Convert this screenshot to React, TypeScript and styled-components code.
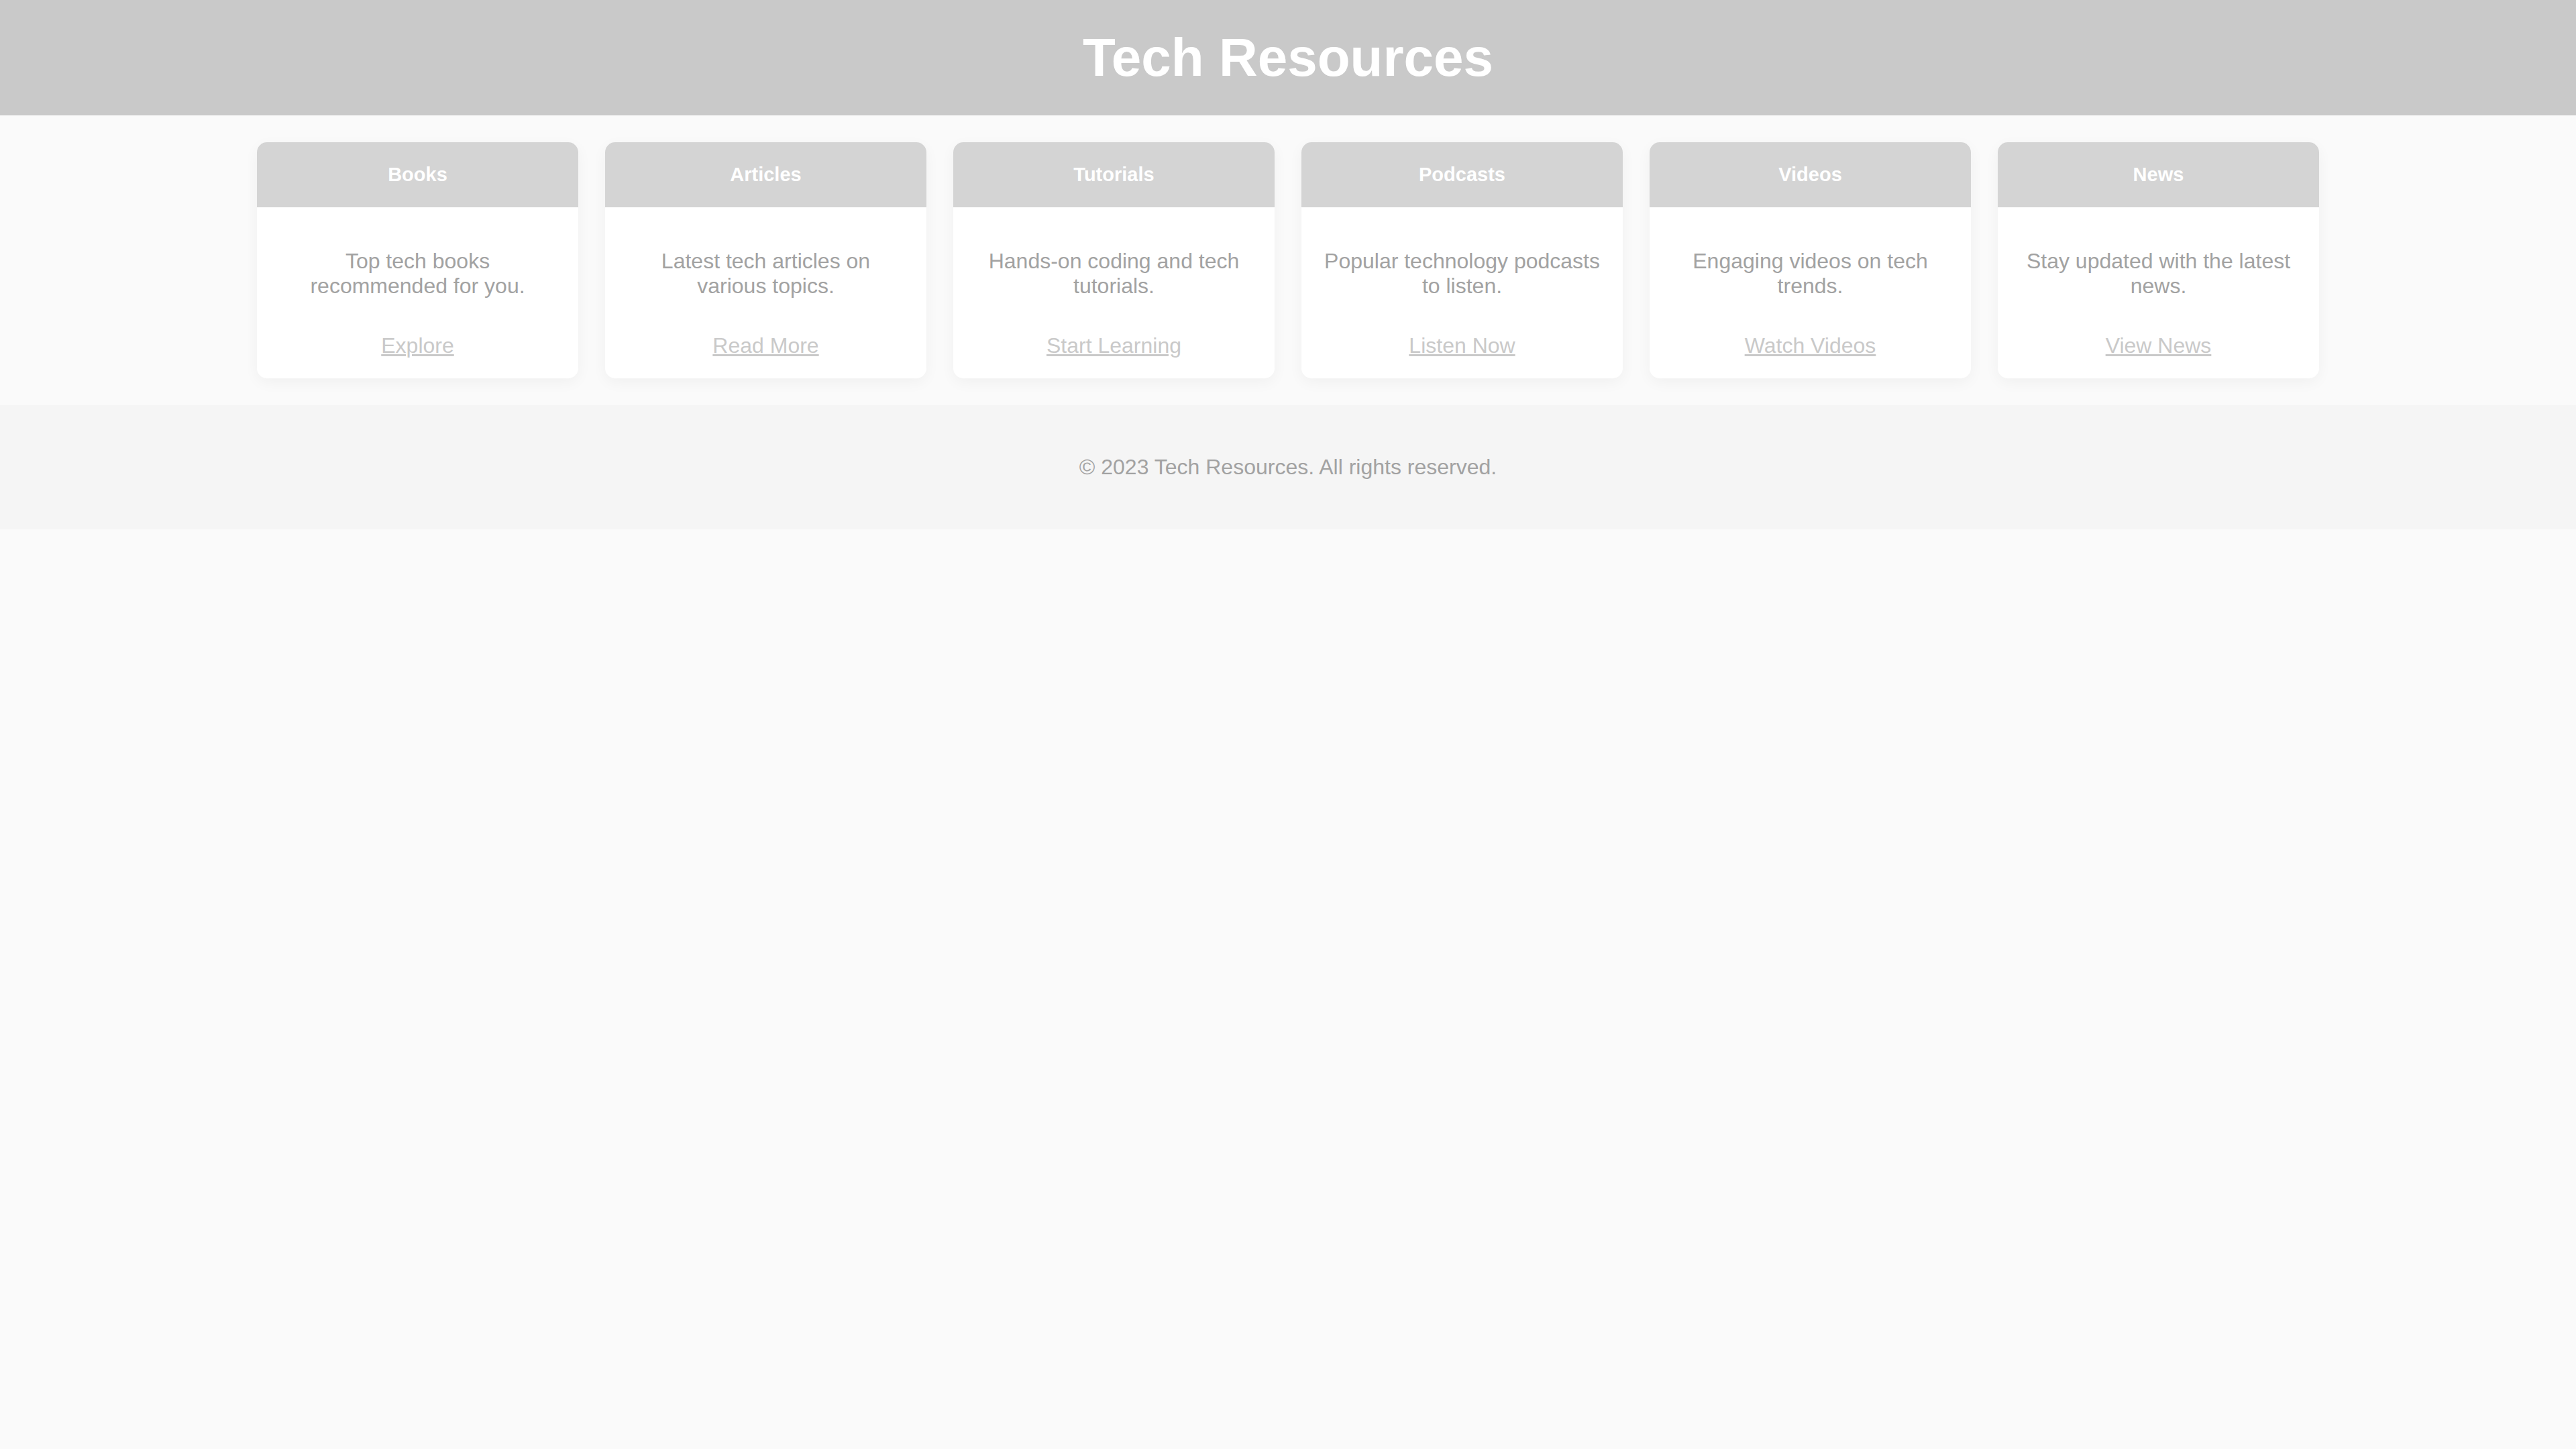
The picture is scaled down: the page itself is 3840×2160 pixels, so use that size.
import { FC } from 'react';
import styled, { createGlobalStyle } from 'styled-components';

const GlobalStyle = createGlobalStyle`
  html, body {
    margin: 0;
    padding: 0;
    background: #fafafa;
    font-family: "Liberation Sans", Arial, Helvetica, sans-serif;
  }
`;

const Header = styled.header`
  background: #c9c9c9;
  padding: 40px 0;
  text-align: center;
`;

const Title = styled.h1`
  margin: 0;
  font-size: 80px;
  font-weight: 700;
  line-height: normal;
  color: #ffffff;
`;

const Main = styled.main`
  padding: 40px 0;
`;

const Grid = styled.section`
  width: 3074px;
  margin: 0 auto;
  display: grid;
  grid-template-columns: repeat(6, 1fr);
  gap: 40px;
`;

const Card = styled.article`
  background: #ffffff;
  border-radius: 15px;
  overflow: hidden;
  box-shadow: 0 6px 22px rgba(0, 0, 0, 0.045);
  text-align: center;
`;

const CardHeader = styled.div`
  background: #d4d4d4;
  padding: 32px 20px;
`;

const CardTitle = styled.h3`
  margin: 0;
  font-size: 29px;
  font-weight: 700;
  line-height: normal;
  color: #ffffff;
`;

const CardBody = styled.div`
  padding: 62px 30px 30px;
`;

const Description = styled.p`
  margin: 0 0 52px;
  font-size: 32px;
  line-height: normal;
  color: #a2a2a2;
`;

const ActionLink = styled.a`
  font-size: 32px;
  line-height: normal;
  color: #c9c9c9;
  text-decoration: underline;
  cursor: pointer;
`;

const Footer = styled.footer`
  background: #f5f5f5;
  padding: 74px 0;
  text-align: center;
`;

const FooterText = styled.p`
  margin: 0;
  font-size: 32px;
  line-height: normal;
  color: #a2a2a2;
`;

interface Resource {
  title: string,
  text: string,
  action: string,
}

const resources: Resource[] = [
  { title: 'Books', text: 'Top tech books recommended for you.', action: 'Explore' },
  { title: 'Articles', text: 'Latest tech articles on various topics.', action: 'Read More' },
  { title: 'Tutorials', text: 'Hands-on coding and tech tutorials.', action: 'Start Learning' },
  { title: 'Podcasts', text: 'Popular technology podcasts to listen.', action: 'Listen Now' },
  { title: 'Videos', text: 'Engaging videos on tech trends.', action: 'Watch Videos' },
  { title: 'News', text: 'Stay updated with the latest news.', action: 'View News' },
];

const App: FC = () => {
  return <>
    <GlobalStyle />
    <Header>
      <Title>Tech Resources</Title>
    </Header>
    <Main>
      <Grid>
        {resources.map(item => (
          <Card key={item.title}>
            <CardHeader>
              <CardTitle>{item.title}</CardTitle>
            </CardHeader>
            <CardBody>
              <Description>{item.text}</Description>
              <ActionLink href="#">{item.action}</ActionLink>
            </CardBody>
          </Card>
        ))}
      </Grid>
    </Main>
    <Footer>
      <FooterText>&copy; 2023 Tech Resources. All rights reserved.</FooterText>
    </Footer>
  </>
}

export default App;
